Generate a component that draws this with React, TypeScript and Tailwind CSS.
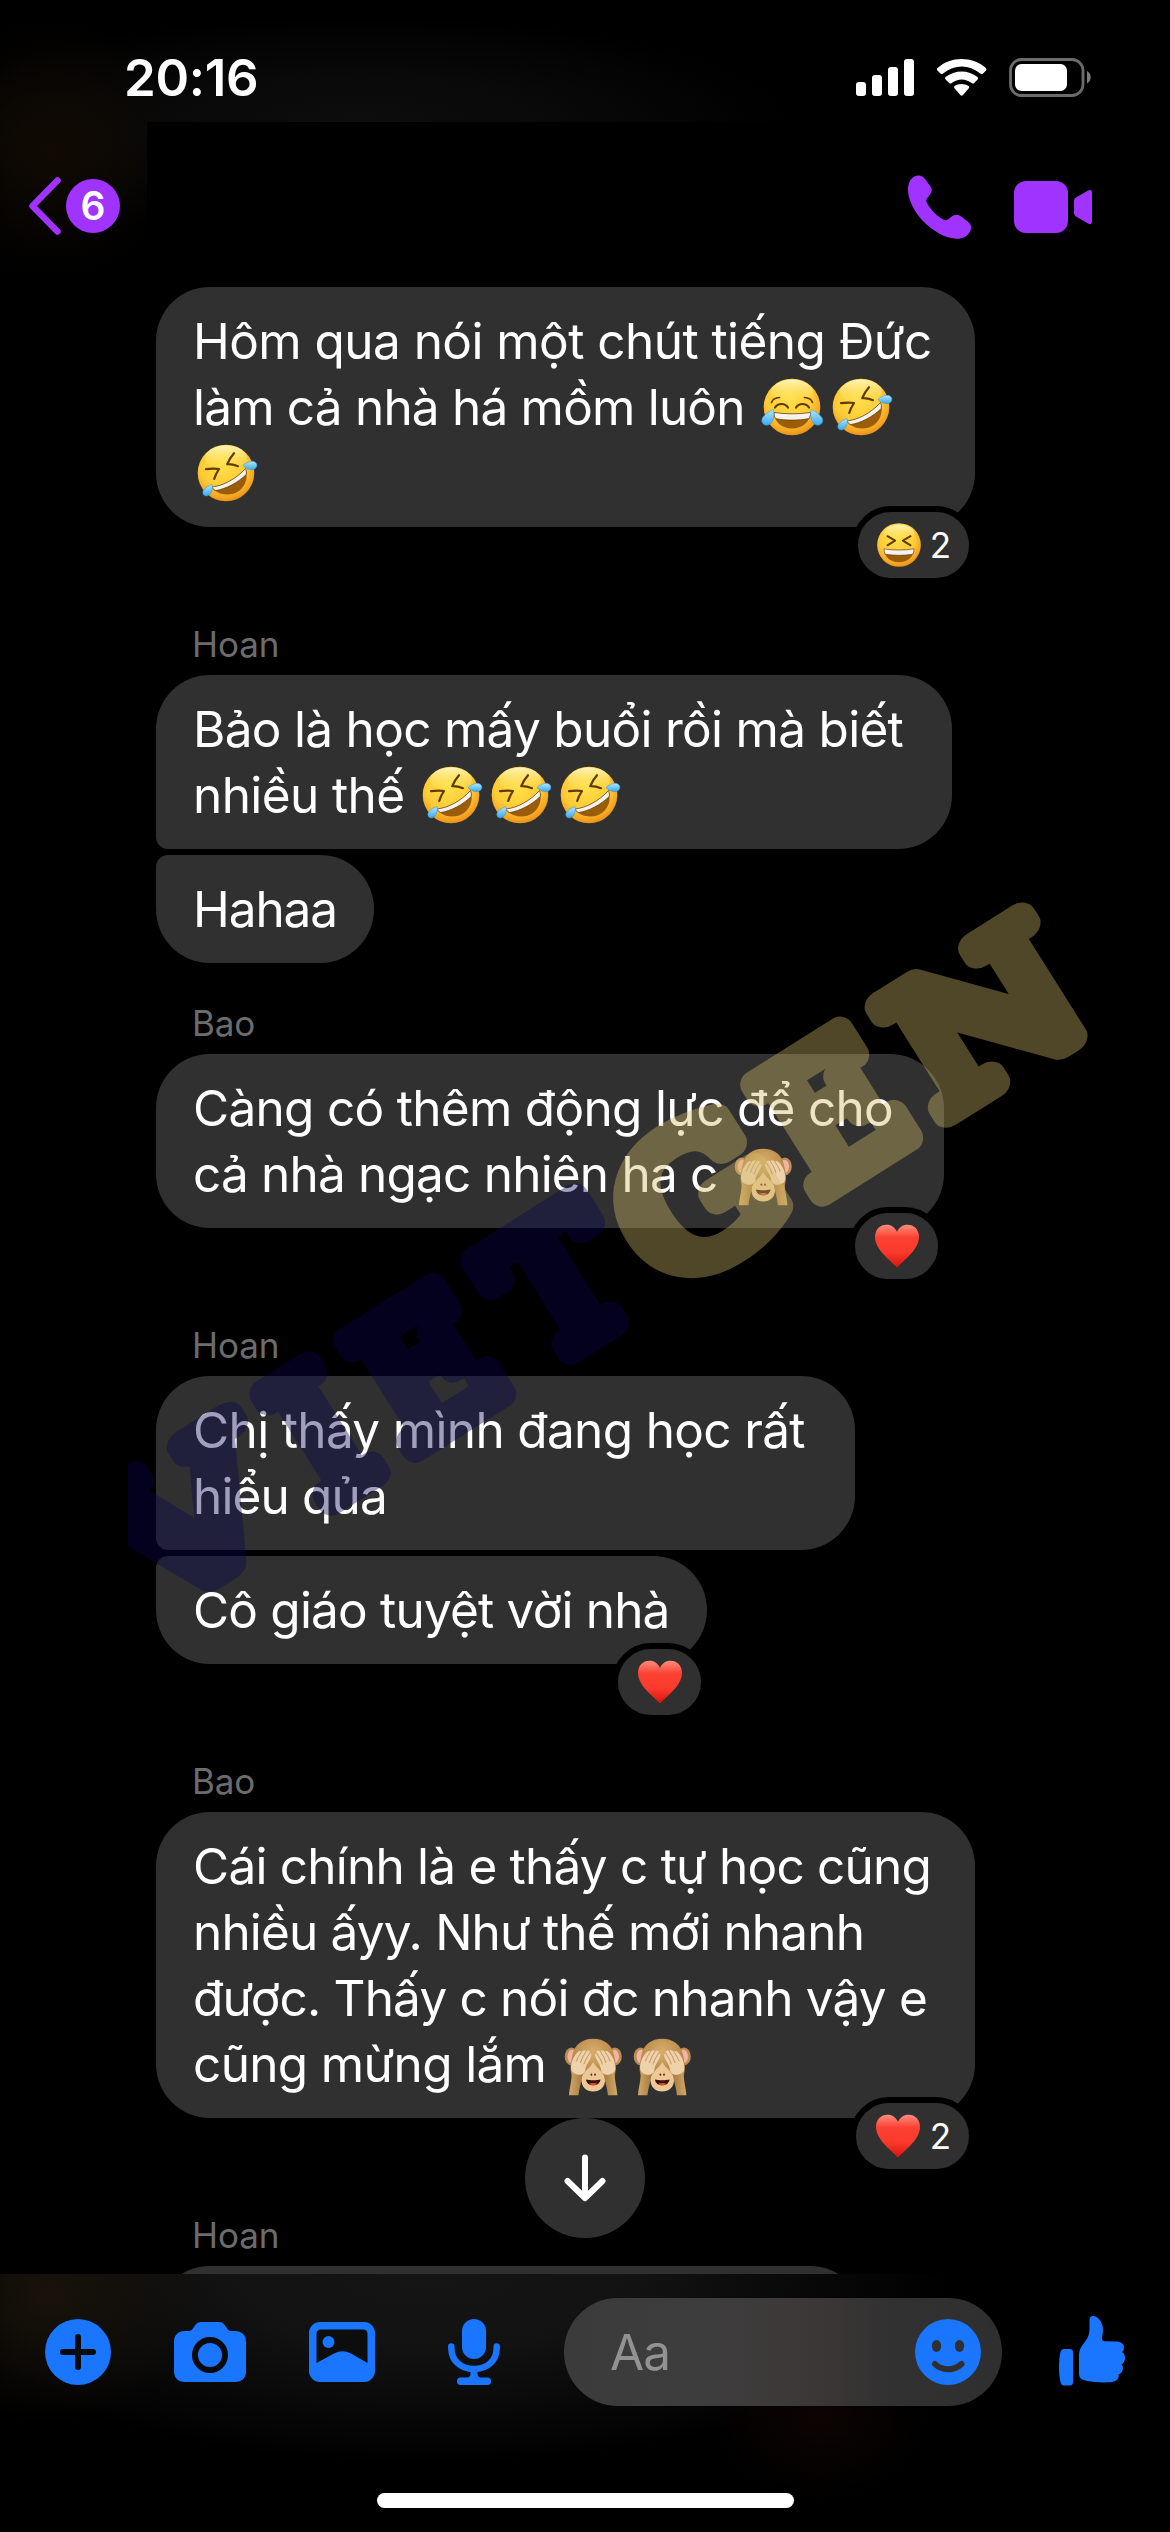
import React from "react";

const INK = "#5f3a06";

function Defs() {
  return (
    <svg width="0" height="0" className="absolute" aria-hidden="true">
      <defs>
        <radialGradient id="face" cx="0.45" cy="0.35" r="0.68">
          <stop offset="0" stopColor="#ffe04a" />
          <stop offset="0.6" stopColor="#fdcb36" />
          <stop offset="0.85" stopColor="#f5a623" />
          <stop offset="1" stopColor="#e58a12" />
        </radialGradient>
        <linearGradient id="shine" x1="0" y1="0" x2="0" y2="1">
          <stop offset="0" stopColor="#fffbd0" stopOpacity="0.85" />
          <stop offset="1" stopColor="#ffe04a" stopOpacity="0" />
        </linearGradient>
        <linearGradient id="tear" x1="0" y1="0" x2="0" y2="1">
          <stop offset="0" stopColor="#b4e6ff" />
          <stop offset="1" stopColor="#36aaf0" />
        </linearGradient>
        <linearGradient id="heart" x1="0" y1="0" x2="0" y2="1">
          <stop offset="0" stopColor="#ff8d7c" />
          <stop offset="0.3" stopColor="#fb4133" />
          <stop offset="0.65" stopColor="#fb3a2c" />
          <stop offset="1" stopColor="#d4140d" />
        </linearGradient>
        <radialGradient id="fur" cx="0.5" cy="0.3" r="0.7">
          <stop offset="0" stopColor="#d8ae6c" />
          <stop offset="1" stopColor="#a8773a" />
        </radialGradient>
        <linearGradient id="arm" x1="0" y1="0" x2="1" y2="0">
          <stop offset="0" stopColor="#d2a868" />
          <stop offset="1" stopColor="#a87b42" />
        </linearGradient>
      </defs>
    </svg>
  );
}

function Base() {
  return (
    <>
      <circle cx="33" cy="33" r="28.3" fill="url(#face)" />
      <ellipse cx="33" cy="18" rx="21" ry="12.5" fill="url(#shine)" />
    </>
  );
}

function Rofl() {
  return (
    <svg viewBox="0 0 69 66" className="h-[66px] w-[69px] shrink-0">
      <Base />
      <path d="M13 29.2C18 28.4 22 28.3 26 29C24 32 22.3 35 21.2 39" fill="none" stroke={INK} strokeWidth="2.2" strokeLinejoin="round" strokeLinecap="round" />
      <path d="M41 13.2C38.5 16 36 20 34.2 24.2C38 24 41.5 24.8 45 26.2" fill="none" stroke={INK} strokeWidth="2.2" strokeLinejoin="round" strokeLinecap="round" />
      <path d="M18.5 47C30 46 43 39 52.5 28.5C55 35 54 45 46 51C37 57 24 55 18.5 47Z" fill="#9c5d0b" />
      <path d="M18.5 47C30 46 43 39 52.5 28.5C53.3 30.5 53.6 32.5 53.2 34.5C45 42.5 33 49 22.5 50.6C21 49.7 19.6 48.5 18.5 47Z" fill="#f6f2ec" stroke={INK} strokeWidth="0.7" />
      <path d="M19 44.5C20 49 18.5 54.5 14 56C10 56.5 8.6 52.5 11 49.5C13 47 16 45.5 19 44.5Z" fill="url(#tear)" stroke="#2f8fce" strokeWidth="0.5" />
      <path d="M50 25.5C53 22.5 58 20.5 61.5 21.7C65 23.5 64.5 28 61 29.3C57 30.5 53 28.5 50 25.5Z" fill="url(#tear)" stroke="#2f8fce" strokeWidth="0.5" />
    </svg>
  );
}

function Joy() {
  return (
    <svg viewBox="0 0 69 66" className="h-[66px] w-[69px] shrink-0">
      <Base />
      <path d="M12.5 28.5C13.5 25.5 16.5 23.7 20.5 23.5M53.5 28.5C52.5 25.5 49.5 23.7 45.5 23.5" fill="none" stroke={INK} strokeWidth="1.7" strokeLinecap="round" />
      <path d="M16 33.5C19 28.8 26 28.8 29 33.5M37 33.5C40 28.8 47 28.8 50 33.5" fill="none" stroke={INK} strokeWidth="2.2" strokeLinecap="round" />
      <path d="M15 38.5C27 40.3 39 40.3 51.5 38.5C51.5 48 43 54.5 33 54.5C23 54.5 15 48 15 38.5Z" fill="#9c5d0b" />
      <path d="M15 38.5C27 40.3 39 40.3 51.5 38.5C51.5 41 51 43 50 44.6C39 46.6 27 46.6 16.5 44.6C15.5 43 15 41 15 38.5Z" fill="#f6f2ec" stroke={INK} strokeWidth="0.7" />
      <path d="M14.5 35.5C15.5 42 14.5 50 8.5 51.3C3.5 51.5 1 47 4 43C6.5 39.7 10.5 37 14.5 35.5Z" fill="url(#tear)" stroke="#2f8fce" strokeWidth="0.5" />
      <path d="M52 35.5C51 42 52 50 58 51.3C63 51.5 65.5 47 62.5 43C60 39.7 56 37 52 35.5Z" fill="url(#tear)" stroke="#2f8fce" strokeWidth="0.5" />
    </svg>
  );
}

function Laugh() {
  return (
    <svg viewBox="0 0 57 57" className="h-[44px] w-[44px] shrink-0">
      <circle cx="28.5" cy="28.5" r="28.3" fill="url(#face)" />
      <ellipse cx="28.5" cy="14" rx="20" ry="12" fill="url(#shine)" />
      <path d="M13.5 17L23.5 22.8L13.5 29M43.5 17L33.5 22.8L43.5 29" fill="none" stroke={INK} strokeWidth="2.4" strokeLinecap="round" strokeLinejoin="round" />
      <path d="M9 33.5C22 35.5 35 35.5 48 33.5C48 44 40 51 28.5 51C17 51 9 44 9 33.5Z" fill="#9c5d0b" />
      <path d="M9 33.5C22 35.5 35 35.5 48 33.5C48 36 47.5 38.5 46.5 40.4C34 42.4 23 42.4 10.5 40.4C9.5 38.5 9 36 9 33.5Z" fill="#f6f2ec" stroke={INK} strokeWidth="0.8" />
    </svg>
  );
}

function Monkey() {
  return (
    <svg viewBox="0 0 69 66" className="h-[66px] w-[69px] shrink-0">
      <ellipse cx="11.5" cy="25.5" rx="6.8" ry="9" fill="#b98d54" />
      <ellipse cx="55" cy="25.5" rx="6.8" ry="9" fill="#b98d54" />
      <ellipse cx="12" cy="25.5" rx="4.5" ry="6.8" fill="#f3b3a4" />
      <ellipse cx="54.5" cy="25.5" rx="4.5" ry="6.8" fill="#f3b3a4" />
      <path d="M33.2 7.7C44 7.7 52 13.5 54 24C55.5 31 58 41 53 47C47 53 20 53 13.5 47C8.5 41 11 31 12.5 24C14.5 13.5 22.5 7.7 33.2 7.7Z" fill="url(#fur)" />
      <path d="M33.2 31C37 38 44 41 45 48C45.5 56 40 60.5 33.2 60.5C26.5 60.5 21 56 21.5 48C22.5 41 29.5 38 33.2 31Z" fill="#ecc896" />
      <path d="M26 48.5C30 49.6 36.5 49.6 40.5 48.5C40 52.5 37 54.3 33.2 54.3C29.5 54.3 26.5 52.5 26 48.5Z" fill="#3a130b" />
      <path d="M29 53C31 51.8 35.5 51.8 37.5 53C35 54.6 31.5 54.6 29 53Z" fill="#e0453a" />
      <ellipse cx="31.4" cy="43.6" rx="0.9" ry="1.2" fill="#5a2c14" />
      <ellipse cx="35" cy="43.6" rx="0.9" ry="1.2" fill="#5a2c14" />
      <g id="hand">
        <path d="M11.5 39L22.5 42C22 50 19 57 18.5 64.2H9C9.5 56 12.5 48 11.5 39Z" fill="url(#arm)" />
        <path d="M11 37C11 31 14 24 18.5 20.5C20 19.3 21.5 20 21 21.5C23 19 25.5 18.3 26 20.3C28.5 18.7 30.5 19.5 29.5 22.5C31.5 22 32 24 30.5 27C28 32 25.5 35.5 25.5 38.5C25 43 21 44.5 17 43.5C13 42.5 11 40.5 11 37Z" fill="#edd2ac" />
        <path d="M21 21.5C19 24 17.5 27 16.5 30M26 20.5C23.5 24 21.5 28 20.5 31.5M29.5 22.5C27 26 25 30 24 33" fill="none" stroke="#c99e66" strokeWidth="1.1" strokeLinecap="round" />
      </g>
      <use href="#hand" transform="matrix(-1 0 0 1 66.4 0)" />
    </svg>
  );
}

function Heart() {
  return (
    <svg viewBox="0 0 46 44" className="h-[44px] w-[46px] shrink-0">
      <path d="M23 43.5C18 38 1 26 1 13C1 5.5 6 0.8 12.5 0.8C17.5 0.8 21 3.5 23 8C25 3.5 28.5 0.8 33.5 0.8C40 0.8 45 5.5 45 13C45 26 28 38 23 43.5Z" fill="url(#heart)" />
    </svg>
  );
}

type Line = { t: string; c?: string; e?: React.ReactNode };

function Bubble({ lines, width, shape, reaction }: { lines: Line[]; width: string; shape?: string; reaction?: React.ReactNode }) {
  return (
    <div className={`relative bg-[#303030] py-[21px] pl-[37px] ${width} ${shape ?? "rounded-[54px]"}`}>
      {lines.map((l, i) => (
        <div key={i} className="flex h-[66px] whitespace-nowrap text-[49.5px] leading-[66px] text-white">
          {l.t && <span className={`shrink-0 ${l.c ?? ""}`}>{l.t}</span>}
          {l.e}
        </div>
      ))}
      {reaction}
    </div>
  );
}

function Reaction({ children, count }: { children: React.ReactNode; count?: number }) {
  return (
    <div className="absolute right-0 -bottom-[57px] flex h-[78px] items-center gap-[9px] rounded-full border-[6px] border-black bg-[#303030] pr-[18px] pl-[19px] text-[35px] text-white">
      {children}
      {count && <span className="leading-[66px]">{count}</span>}
    </div>
  );
}

function Name({ children, after }: { children: string; after?: boolean }) {
  return (
    <div className={`h-[91px] pt-[38px] pl-[36px] text-[35px] leading-[44px] tracking-[-0.1px] text-[#6c6c6c] ${after ? "mt-[57px]" : ""}`}>
      {children}
    </div>
  );
}

function Header() {
  return (
    <header className="relative h-[272px] shrink-0 bg-[radial-gradient(ellipse_130px_130px_at_50px_150px,#110a03_0%,transparent_100%),radial-gradient(ellipse_430px_110px_at_360px_125px,#0d0d0d_0%,#090909_45%,transparent_100%)]">
      <div className="flex h-[122px] items-start pt-[47px] pl-[124px] text-white">
        <span className="h-[62px] w-[732px] text-[51px] leading-[62px] font-semibold tracking-[-0.3px]">20:16</span>
        <svg viewBox="0 0 240 44" className="mt-2 h-[44px] w-[240px]" fill="white">
          <rect x="0" y="27" width="10" height="14" rx="3" />
          <rect x="16" y="20" width="10" height="21" rx="3" />
          <rect x="32" y="12" width="10" height="29" rx="3" />
          <rect x="48" y="4" width="10" height="37" rx="3" />
          <path d="M81.5 13C95 1 116 1 130 13Q131 14.5 130 15.5L127 18.5Q125.7 19.6 124.3 18.5C113 9 98.5 9 87 18.5Q85.7 19.6 84.5 18.5L81.4 15.5Q80.3 14.2 81.5 13Z" />
          <path d="M89.5 22C99 14.5 112.5 14.5 121.5 22Q122.8 23.4 121.6 24.6L118.2 28Q117 29 115.6 28C109.5 23.2 101.8 23.2 95.7 28Q94.3 29 93.1 28L89.7 24.6Q88.3 23.4 89.5 22Z" />
          <path d="M98.5 31C102.5 28.2 108.5 28.2 112.8 31Q113.8 32 112.8 33.2L107 40Q105.7 41.5 104.4 40L98.5 33.2Q97.5 32 98.5 31Z" />
          <rect x="154.5" y="4.5" width="72.5" height="36" rx="11" fill="none" stroke="#6b6b6b" strokeWidth="2.8" />
          <rect x="159" y="9" width="52" height="27" rx="6.5" />
          <path d="M231 16C236 18.5 236 26 231 28.5Z" fill="#7a7a7a" />
        </svg>
      </div>
      <div className="flex h-[145px]">
        <div className="flex w-[147px] items-center pt-[36px] pl-[28px] pb-[13px]">
          <svg viewBox="0 0 36 60" className="h-[60px] w-[36px]">
            <path d="M29.5 4.5L4.5 30L29.5 55.5" fill="none" stroke="#a033ff" strokeWidth="6.5" strokeLinecap="round" strokeLinejoin="round" />
          </svg>
          <span className="ml-[2px] flex h-[54px] w-[54px] items-center justify-center rounded-full bg-[#a033ff] text-[39px] leading-[54px] font-semibold text-white">6</span>
        </div>
        <div className="flex flex-1 items-start bg-black pt-[53px] pl-[760px]">
          <svg viewBox="0 0 64 64" className="h-[64px] w-[65px]">
            <path d="M0.5 13C1 5 6 0.5 11 0.5C14 0.5 16 2 18 4.5L23 11.5C25 14.5 24.5 17 22.5 19.5L19.5 23.5C18.5 25 18.7 26.5 19.5 28C24 36 30 41.5 36.5 44.8C38 45.5 39.2 45.4 40.5 44.5L44.5 41.3C47 39.3 50 39 53 41L60 46.3C64 49.5 64.5 53 62.5 56.5C59.5 61.5 55 64 49 63.8C38 63.5 25 56 15 45.5C5.5 35 0 23 0.5 13Z" fill="#a033ff" />
          </svg>
          <svg viewBox="0 0 78 52" className="mt-[6px] ml-[42px] h-[52px] w-[78px]" fill="#a033ff">
            <rect x="0" y="0" width="54" height="52" rx="12" />
            <path d="M62 16.5L74 9.5C76.5 8.2 78 9 78 11.5V40.5C78 43 76.5 43.8 74 42.5L62 35.5C60.5 34.5 60 33.5 60 32V20C60 18.5 60.5 17.5 62 16.5Z" />
          </svg>
        </div>
      </div>
    </header>
  );
}

function Composer() {
  const blue = "#1a75ff";
  return (
    <footer className="relative flex h-[258px] shrink-0 flex-col items-center bg-[radial-gradient(ellipse_150px_130px_at_50px_20px,#18120a_0%,transparent_100%),radial-gradient(ellipse_110px_90px_at_820px_140px,#0c0402_0%,transparent_100%),radial-gradient(ellipse_520px_190px_at_430px_0px,#151515_0%,#121212_40%,transparent_100%)]">
      <div className="flex w-full items-center pt-6 pl-[45px]">
        <svg viewBox="0 0 66 66" className="h-[66px] w-[66px]">
          <circle cx="33" cy="33" r="33" fill={blue} />
          <path d="M33 18V48M18 33H48" stroke="#0a0a0a" strokeWidth="6" strokeLinecap="round" />
        </svg>
        <svg viewBox="0 0 72 60" className="ml-[63px] h-[60px] w-[72px]">
          <path d="M27 0H45C48 0 49.5 1.5 51 3.5L53.5 7C54.5 8.5 56 9 58 9H61C68 9 72 13 72 20V49C72 56 68 60 61 60H11C4 60 0 56 0 49V20C0 13 4 9 11 9H14C16 9 17.5 8.5 18.5 7L21 3.5C22.5 1.5 24 0 27 0Z" fill={blue} />
          <circle cx="36" cy="33" r="15" fill="none" stroke="#0a0a0a" strokeWidth="6" />
        </svg>
        <svg viewBox="0 0 66 60" className="ml-[63px] h-[60px] w-[66px]">
          <rect width="66" height="60" rx="11" fill={blue} />
          <path d="M12 7.5H54Q58.5 7.5 58.5 12V41L42 31.5Q33.5 27 25 31.5L7.5 41V12Q7.5 7.5 12 7.5Z" fill="#0d0d0d" />
          <circle cx="19.5" cy="20" r="6" fill={blue} />
        </svg>
        <svg viewBox="0 0 52 66" className="ml-[73px] h-[66px] w-[52px]" fill={blue}>
          <rect x="14" y="0" width="24" height="40" rx="12" />
          <path d="M3.3 27.5V29C3.3 41 12 50 26 50C40 50 48.7 41 48.7 29V27.5" fill="none" stroke={blue} strokeWidth="6.5" strokeLinecap="round" />
          <path d="M22.5 50H29.5V54.5Q29.5 58.5 33 58.5H39.5Q43 58.5 43 62.2Q43 66 39.5 66H12.5Q9 66 9 62.2Q9 58.5 12.5 58.5H19Q22.5 58.5 22.5 54.5Z" />
        </svg>
        <div className="ml-[64px] flex h-[108px] w-[438px] items-center justify-between rounded-full bg-[linear-gradient(90deg,#3b3b3b_0%,#3e3d3d_35%,#3b3736_58%,#313131_75%,#2f2f2f_100%)] pr-[21px] pl-[46px]">
          <span className="text-[49.5px] leading-[66px] tracking-[-1px] text-[#929292]">Aa</span>
          <svg viewBox="0 0 66 66" className="h-[66px] w-[66px]">
            <circle cx="33" cy="33" r="33" fill={blue} />
            <ellipse cx="21.5" cy="27" rx="4.7" ry="6" fill="#2f2f2f" />
            <ellipse cx="44.5" cy="27" rx="4.7" ry="6" fill="#2f2f2f" />
            <path d="M20 45C27 52 39 52 46.5 45" fill="none" stroke="#2f2f2f" strokeWidth="6" strokeLinecap="round" />
          </svg>
        </div>
        <svg viewBox="0 0 66 70" className="ml-[57px] mb-[3px] h-[70px] w-[66px]" fill={blue}>
          <path d="M4.5 33H11Q14 33 14 36.5V66Q14 69.5 11 69.5H5Q2.5 69.5 1.7 67C-0.5 59 -0.5 44 1.5 36Q2.3 33 4.5 33Z" />
          <path d="M20 40C20 35 21 32.5 23.5 29C28 23 30.5 20 30.5 13V4C30.5 1.5 31.5 0 34 0C40 0 44.5 8 44 15L43 22.5Q42.8 25.2 45.5 25.2L57.5 25.5C62 25.7 65 28 65 31.5C65 33.5 64.3 35 63 36C65.5 37.5 66.3 40 66 42.5C65.7 45.5 64.5 47.5 62.5 48.5C64 50 64.3 52 63.7 54C63 56.5 61.5 58 59.5 58.5C60.5 63.5 56.5 66 50 66.3C40 66.7 31 66 24.5 64Q20 62.5 20 58Z" />
        </svg>
      </div>
      <div className="mt-[87px] h-[15px] w-[417px] rounded-full bg-white" />
    </footer>
  );
}

/* x / sx place each character along the rotated baseline */
const BRAND = [
  { c: "V", x: -300, sx: 1.32, f: "#080550" },
  { c: "I", x: -95, sx: 1.05, f: "#080550" },
  { c: "E", x: 4, sx: 0.99, f: "#080550" },
  { c: "T", x: 163, sx: 1.04, f: "#080550" },
  { c: "G", x: 308, sx: 1.12, f: "#d2bb69" },
  { c: "E", x: 485, sx: 0.99, f: "#d2bb69" },
  { c: "N", x: 634, sx: 1.2, f: "#d2bb69" },
];

function Watermark() {
  return (
    <svg viewBox="128 860 1000 780" className="pointer-events-none absolute top-[860px] left-[128px] h-[780px] w-[1000px] overflow-hidden">
      <g opacity="0.38" transform="translate(411 1468) rotate(-32.2)">
        {BRAND.map((b, i) => (
          <text
            key={i}
            transform={`translate(${b.x} -14) scale(${b.sx} 1)`}
            fontSize="175"
            strokeWidth="28"
            strokeLinejoin="round"
            fill={b.f}
            stroke={b.f}
            className="font-['DejaVu_Serif',serif] font-normal"
          >
            {b.c}
          </text>
        ))}
      </g>
    </svg>
  );
}

export default function App() {
  return (
    <div className="relative flex h-[2532px] w-[1170px] flex-col overflow-hidden bg-black font-[Inter,'Noto_Sans',sans-serif]">
      <Defs />
      <Header />
      <main className="min-h-0 flex-1 overflow-hidden pt-[15px] pl-[156px]">
        <Bubble
          width="w-[819px]"
          lines={[
            { t: "Hôm qua nói một chút tiếng Đức", c: "tracking-[-0.55px]" },
            { t: "làm cả nhà há mồm luôn", c: "w-[566px] tracking-[-0.8px]", e: <><Joy /><Rofl /></> },
            { t: "", e: <Rofl /> },
          ]}
          reaction={<Reaction count={2}><Laugh /></Reaction>}
        />
        <Name after>Hoan</Name>
        <Bubble
          width="w-[796px]"
          shape="rounded-[54px] rounded-bl-[12px]"
          lines={[
            { t: "Bảo là học mấy buổi rồi mà biết", c: "tracking-[-0.7px]" },
            { t: "nhiều thế", c: "w-[225px] tracking-[-0.6px]", e: <><Rofl /><Rofl /><Rofl /></> },
          ]}
        />
        <div className="h-[6px]" />
        <Bubble width="w-[218px]" shape="rounded-[54px] rounded-tl-[12px]" lines={[{ t: "Hahaa", c: "tracking-[-1.1px]" }]} />
        <Name>Bao</Name>
        <Bubble
          width="w-[788px]"
          lines={[
            { t: "Càng có thêm động lực để cho", c: "tracking-[-0.7px]" },
            { t: "cả nhà ngạc nhiên ha c", c: "w-[537px] tracking-[-0.8px]", e: <Monkey /> },
          ]}
          reaction={<Reaction><Heart /></Reaction>}
        />
        <Name after>Hoan</Name>
        <Bubble
          width="w-[699px]"
          shape="rounded-[54px] rounded-bl-[12px]"
          lines={[
            { t: "Chị thấy mình đang học rất", c: "tracking-[-0.65px]" },
            { t: "hiểu qủa", c: "tracking-[-0.85px]" },
          ]}
        />
        <div className="h-[6px]" />
        <Bubble
          width="w-[551px]"
          shape="rounded-[54px] rounded-tl-[12px]"
          lines={[{ t: "Cô giáo tuyệt vời nhà", c: "tracking-[-0.8px]" }]}
          reaction={<Reaction><Heart /></Reaction>}
        />
        <Name after>Bao</Name>
        <Bubble
          width="w-[819px]"
          lines={[
            { t: "Cái chính là e thấy c tự học cũng", c: "tracking-[-0.78px]" },
            { t: "nhiều ấyy. Như thế mới nhanh", c: "tracking-[-0.83px]" },
            { t: "được. Thấy c nói đc nhanh vậy e", c: "tracking-[-0.8px]" },
            { t: "cũng mừng lắm", c: "w-[367px] tracking-[-0.65px]", e: <><Monkey /><Monkey /></> },
          ]}
          reaction={<Reaction count={2}><Heart /></Reaction>}
        />
        <Name after>Hoan</Name>
        <div className="h-[108px] w-[708px] rounded-[54px] bg-[#303030]" />
      </main>
      <Composer />
      <button className="absolute top-[2118px] left-[525px] flex h-[120px] w-[120px] items-center justify-center rounded-full bg-[#303030]" aria-label="Scroll down">
        <svg viewBox="0 0 42 48" className="h-[48px] w-[42px]">
          <path d="M21 3.5V44M3.5 27L21 44L38.5 27" fill="none" stroke="white" strokeWidth="6" strokeLinecap="round" strokeLinejoin="round" />
        </svg>
      </button>
      <Watermark />
    </div>
  );
}
